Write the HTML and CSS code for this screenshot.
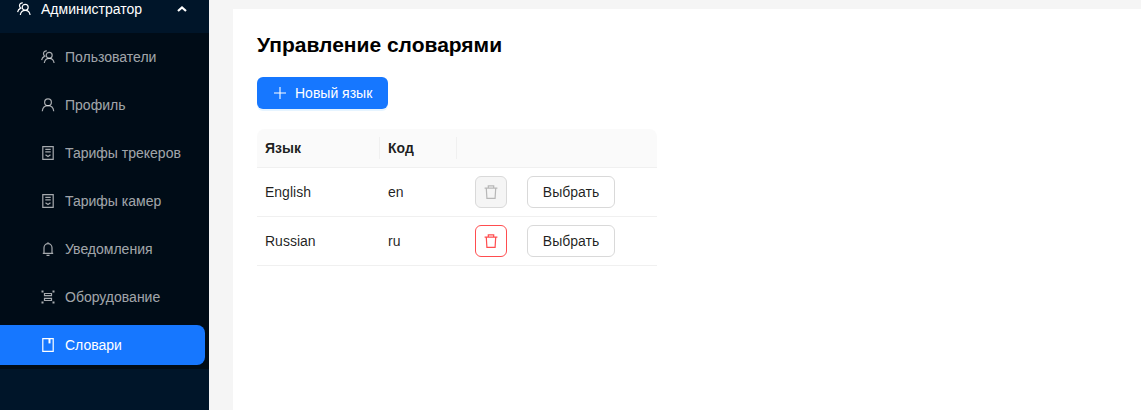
FILE: index.html
```html
<!DOCTYPE html>
<html lang="en">
<head>
    <meta charset="UTF-8">
    <meta name="viewport" content="width=device-width, initial-scale=1.0">
    <title>Словари</title>
    <link rel="stylesheet" href="styles.css">
</head>
<body>
    <svg class="sprite" width="0" height="0" aria-hidden="true">
        <symbol id="i-team" viewBox="0 0 14 14">
            <circle cx="8.2" cy="5.300" r="3"/>
            <path d="M3.300 13c.4-2.800 2.400-4.700 4.900-4.700s4.500 1.900 4.900 4.700"/>
            <path d="M5.800 .8C4 .6 2.500 1.900 2.500 3.800c0 1 .5 1.800 1.200 2.300C1.900 6.900.9 8.300.6 10.200"/>
        </symbol>
        <symbol id="i-user" viewBox="0 0 14 14">
            <circle cx="7" cy="4.300" r="3.400"/>
            <path d="M1.300 13.200c.3-3.300 2.700-5.500 5.700-5.500s5.400 2.200 5.700 5.500"/>
        </symbol>
        <symbol id="i-tariff" viewBox="0 0 14 14">
            <path d="M1.800 .6h10.400v12.800H1.800z"/>
            <path d="M4.300 3.300h5.400M4.300 5.800h5.400M4.500 8.800l2.500 1.800 2.500-1.800"/>
        </symbol>
        <symbol id="i-bell" viewBox="0 0 14 14">
            <path d="M3 11.300V5.800C3 3.500 4.800 1.700 7 1.700s4 1.800 4 4.100v5.500zM1.800 11.300h10.400M7 .3v1.400M5.500 13.300h3"/>
        </symbol>
        <symbol id="i-scan" viewBox="0 0 14 14">
            <path class="dots" d="M.5 .5h2v2h-2zM11.500 .5h2v2h-2zM.5 11.500h2v2h-2zM11.500 11.500h2v2h-2z"/>
            <path d="M3.500 3.500h7v2.200h-7zM3.500 8.300h7v2.200h-7z"/>
        </symbol>
        <symbol id="i-book" viewBox="0 0 14 14">
            <path d="M1.800 .6h10.400v12.800H1.800z"/>
            <path class="dots" d="M7.500 .6h2v4.800h-2z"/>
        </symbol>
        <symbol id="i-trash" viewBox="0 0 14 14">
            <path d="M.6 3.200h12.800M4.300 3.200V.8h5.400v2.400M2.300 3.200l.6 10.200h8.200l.6-10.200"/>
        </symbol>
    </svg>

    <div class="layout">
        <aside class="sidebar">
            <div class="menu-head">
                <svg class="icon"><use href="#i-team"/></svg>
                <span>Администратор</span>
                <svg class="chevron" viewBox="0 0 10 6"><path d="M1 5l4-3.500L9 5"/></svg>
            </div>
            <nav class="submenu">
                <a class="menu-item"><svg class="icon"><use href="#i-team"/></svg>Пользователи</a>
                <a class="menu-item"><svg class="icon"><use href="#i-user"/></svg>Профиль</a>
                <a class="menu-item"><svg class="icon"><use href="#i-tariff"/></svg>Тарифы трекеров</a>
                <a class="menu-item"><svg class="icon"><use href="#i-tariff"/></svg>Тарифы камер</a>
                <a class="menu-item"><svg class="icon"><use href="#i-bell"/></svg>Уведомления</a>
                <a class="menu-item"><svg class="icon"><use href="#i-scan"/></svg>Оборудование</a>
                <a class="menu-item active"><svg class="icon"><use href="#i-book"/></svg>Словари</a>
            </nav>
        </aside>

        <main class="main">
            <section class="content">
                <h2>Управление словарями</h2>
                <button type="button" class="btn-primary">
                    <svg class="plus" viewBox="0 0 12 12"><path d="M6 0v12M0 6h12"/></svg>
                    Новый язык
                </button>
                <table class="lang-table">
                    <thead>
                        <tr>
                            <th class="col-name"><span class="th-cell">Язык</span></th>
                            <th class="col-code"><span class="th-cell">Код</span></th>
                            <th></th>
                        </tr>
                    </thead>
                    <tbody>
                        <tr>
                            <td>English</td>
                            <td>en</td>
                            <td>
                                <div class="actions">
                                    <button type="button" class="btn-icon" disabled><svg class="icon"><use href="#i-trash"/></svg></button>
                                    <button type="button" class="btn-default">Выбрать</button>
                                </div>
                            </td>
                        </tr>
                        <tr>
                            <td>Russian</td>
                            <td>ru</td>
                            <td>
                                <div class="actions">
                                    <button type="button" class="btn-icon danger"><svg class="icon"><use href="#i-trash"/></svg></button>
                                    <button type="button" class="btn-default">Выбрать</button>
                                </div>
                            </td>
                        </tr>
                    </tbody>
                </table>
            </section>
        </main>
    </div>
</body>
</html>
```

FILE: styles.css
```css
* {
    box-sizing: border-box;
}

html, body {
    height: 100%;
}

body {
    margin: 0;
    font-family: 'Liberation Sans', Arial, sans-serif;
    font-size: 14px;
    color: rgba(0, 0, 0, 0.88);
    overflow: hidden;
}

.sprite {
    position: absolute;
}

.layout {
    display: flex;
    height: 410px;
}

/* Sidebar */
.sidebar {
    width: 209px;
    flex-shrink: 0;
    background-color: #001529;
}

.menu-head {
    display: flex;
    align-items: center;
    height: 33px;
    padding: 0 22px 16px 17px;
    color: #fff;
}

.menu-head span {
    flex: 1;
    margin-left: 10px;
}

.icon {
    width: 14px;
    height: 14px;
    flex-shrink: 0;
    fill: none;
    stroke: currentColor;
    stroke-width: 1.2;
}

.dots {
    fill: currentColor;
    stroke: none;
}

.chevron {
    width: 10px;
    height: 6px;
    fill: none;
    stroke: #fff;
    stroke-width: 2.2;
}

.submenu {
    display: flex;
    flex-direction: column;
    gap: 8px;
    padding: 4px 0;
    background-color: #000c17;
}

.menu-item {
    display: flex;
    align-items: center;
    gap: 10px;
    height: 40px;
    margin-right: 4px;
    padding-left: 41px;
    border-radius: 0 8px 8px 0;
    color: rgba(255, 255, 255, 0.65);
}

.menu-item.active {
    background-color: #1677ff;
    color: #fff;
}

/* Main */
.main {
    flex: 1;
    padding: 9px 0 0 24px;
    background-color: #f5f5f5;
}

.content {
    height: 100%;
    padding: 24px;
    background-color: #fff;
}

h2 {
    margin: 0 0 20px;
    font-size: 21px;
    line-height: 24px;
    color: #000;
}

.btn-primary {
    display: flex;
    align-items: center;
    gap: 9px;
    width: 131px;
    height: 32px;
    padding: 0 0 0 17px;
    border: none;
    border-radius: 6px;
    background-color: #1677ff;
    color: #fff;
    font: inherit;
    box-shadow: 0 2px 0 rgba(5, 145, 255, 0.1);
}

.plus {
    width: 12px;
    height: 12px;
    stroke: currentColor;
    stroke-width: 1.1;
}

/* Table */
.lang-table {
    width: 400px;
    margin-top: 20px;
    border-collapse: separate;
    border-spacing: 0;
    table-layout: fixed;
}

.lang-table th {
    height: 39px;
    padding: 0 8px;
    background-color: #fafafa;
    border-bottom: 1px solid #f0f0f0;
    font-weight: bold;
    text-align: left;
}

.lang-table th:first-child {
    border-top-left-radius: 8px;
}

.lang-table th:last-child {
    border-top-right-radius: 8px;
}

.col-name {
    width: 123px;
}

.col-code {
    width: 77px;
}

.th-cell {
    display: block;
    line-height: 22px;
}

.col-name, .col-code {
    background-image: linear-gradient(#f0f0f0, #f0f0f0);
    background-repeat: no-repeat;
    background-size: 1px 22px;
    background-position: right center;
}

.lang-table td {
    height: 49px;
    padding: 0 8px;
    border-bottom: 1px solid #f0f0f0;
}

.actions {
    display: flex;
    gap: 20px;
    padding-left: 10px;
}

.btn-icon {
    display: flex;
    align-items: center;
    justify-content: center;
    width: 32px;
    height: 32px;
    padding: 0;
    border: 1px solid #d9d9d9;
    border-radius: 6px;
    background-color: rgba(0, 0, 0, 0.04);
    color: rgba(0, 0, 0, 0.25);
}

.btn-icon.danger {
    border-color: #ff4d4f;
    background-color: #fff;
    color: #ff4d4f;
}

.btn-default {
    width: 88px;
    height: 32px;
    padding: 0;
    border: 1px solid #d9d9d9;
    border-radius: 6px;
    background-color: #fff;
    color: rgba(0, 0, 0, 0.88);
    font: inherit;
}
```
